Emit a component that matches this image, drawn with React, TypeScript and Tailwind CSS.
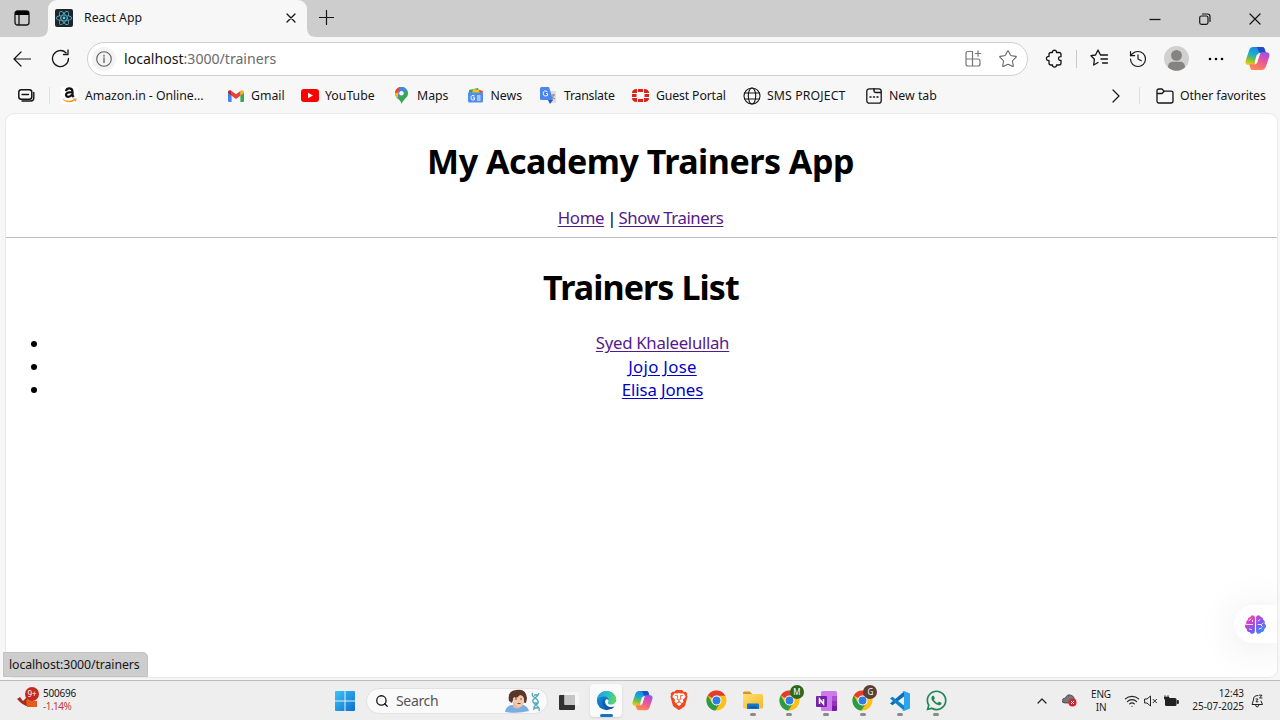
import React from "react";
import { FaBrain, FaReact, FaWhatsapp } from "react-icons/fa";
import { SiBrave } from "react-icons/si";
import { History, Star, Wifi, Search as SearchIcon } from "lucide-react";

const line = { fill: "none", stroke: "currentColor", strokeLinecap: "round" as const, strokeLinejoin: "round" as const };

function Gradients() {
  return (
    <svg className="absolute h-0 w-0" aria-hidden="true">
      <defs>
        <linearGradient id="brain" x1="0" y1="0" x2="1" y2="1">
          <stop offset="0" stopColor="#ff7a59" /><stop offset=".28" stopColor="#d63ecb" />
          <stop offset=".6" stopColor="#6f5cf5" /><stop offset="1" stopColor="#25a8ff" />
        </linearGradient>
        <linearGradient id="copA" x1=".6" y1="0" x2=".3" y2="1">
          <stop offset="0" stopColor="#1787e0" /><stop offset=".4" stopColor="#18a8d8" />
          <stop offset=".7" stopColor="#6cc04a" /><stop offset="1" stopColor="#f2c811" />
        </linearGradient>
        <linearGradient id="copB" x1=".7" y1="0" x2=".3" y2="1">
          <stop offset="0" stopColor="#a04ee8" /><stop offset=".45" stopColor="#e8559a" />
          <stop offset="1" stopColor="#ff8a4c" />
        </linearGradient>
        <linearGradient id="edgeA" x1="0" y1=".3" x2="1" y2=".5">
          <stop offset="0" stopColor="#1fa2e6" /><stop offset=".55" stopColor="#28c0c0" /><stop offset="1" stopColor="#62d957" />
        </linearGradient>
        <linearGradient id="edgeB" x1="0" y1="0" x2="1" y2="1">
          <stop offset="0" stopColor="#1795e0" /><stop offset="1" stopColor="#0b4da0" />
        </linearGradient>
        <linearGradient id="win" x1="0" y1="0" x2="1" y2="1">
          <stop offset="0" stopColor="#3cc4f5" /><stop offset="1" stopColor="#0a6fd0" />
        </linearGradient>
        <linearGradient id="folder" x1="0" y1="0" x2="1" y2="1">
          <stop offset="0" stopColor="#ffdf70" /><stop offset="1" stopColor="#f5b92b" />
        </linearGradient>
      </defs>
    </svg>
  );
}

function Copilot({ size }: { size: number }) {
  return (
    <svg width={size} height={size} viewBox="0 0 24 24">
      <path d="M8 1h8.5c1.3 0 2 .8 2.4 2L20 6.500h-5.200c-1.500 0-2.300.8-2.700 2.200L10 15.500c-.5 1.700-1.500 2.600-3.200 2.600H3.500C1 18.100 0 16.500.7 13.800L4 4C4.700 2 6 1 8 1z" fill="url(#copA)" />
      <path d="M12.500 1h4c1.300 0 2 .8 2.400 2L20 6.500h-4.500c-1.600 0-2.200-.7-2.600-2.300C12.400 2.500 12 1.500 10.500 1z" fill="#1b4fc0" />
      <path d="M16 23H7.500c-1.300 0-2-.8-2.400-2L4 17.500h5.200c1.500 0 2.300-.8 2.700-2.200L14 8.500c.5-1.700 1.500-2.600 3.200-2.600h3.300c2.500 0 3.500 1.600 2.800 4.300L20 20c-.7 2-2 3-4 3z" fill="url(#copB)" />
      <path d="M11.300 8.300h2.800l-2.600 7.400H9.200z" fill="#f7f7f7" />
    </svg>
  );
}

function Edge() {
  return (
    <svg width="21" height="21" viewBox="0 0 24 24">
      <circle cx="12" cy="12" r="11" fill="url(#edgeB)" />
      <path d="M1 12C1.500 5.500 6 1 12 1c6.500 0 11 4.700 11 9.800 0 3.500-2.500 5.700-5.700 5.700-2.500 0-4.300-1-3.500-2.300 1.800-3 .2-6.700-4.300-6.700C5 7.500 1.600 9.500 1 12z" fill="url(#edgeA)" />
      <path d="M9 12.500c0 4 3.500 7 7.500 7 2.200 0 4-.7 5-1.500-1 1.500-2.200 2.800-3.800 3.700C12 22.500 7.500 19 7.500 14.500c0-2.500 1.500-4.500 3.700-5C9.700 10.200 9 11.300 9 12.500z" fill="#0c59a4" />
      <path d="M13.800 14.200c-.8 1.300 1 2.300 3.500 2.300 2.200 0 4.200-1.100 5.100-3l.8 1.200c-.3 1.300-.8 2.500-1.500 3.500-1.400.9-3 1.300-4.700 1.300-4 0-6.500-3-6.500-6 0-1.300.5-2.200 1.300-2.900 2.300 0 3.600 1.400 2 3.600z" fill="#fafafa" />
    </svg>
  );
}

function Chrome() {
  return (
    <svg width="21" height="21" viewBox="0 0 24 24">
      <circle cx="12" cy="12" r="11.500" fill="#fbc116" />
      <path d="M12 12L2 6.300A11.500 11.500 0 0 1 22 6.500H12z" fill="#e33b2e" />
      <path d="M2 6.300l5.300 8.900L12 17.300 10.900 23.500A11.500 11.500 0 0 1 2 6.300z" fill="#2a9b47" />
      <path d="M12 17.500l3-1-4.100 7z" fill="#2a9b47" />
      <circle cx="12" cy="12" r="5.700" fill="#fff" /><circle cx="12" cy="12" r="4.500" fill="#2f7de1" />
    </svg>
  );
}

function BadgedChrome({ letter, color }: { letter: string; color: string }) {
  return (
    <span className="relative block">
      <Chrome />
      <span className={`absolute -top-[5px] left-[11px] flex size-[14px] items-center justify-center rounded-full text-[8px] text-white ${color}`}>{letter}</span>
    </span>
  );
}

function TabBar() {
  return (
    <header className="flex h-[37px] shrink-0 bg-[#cdcdcd]">
      <div className="flex w-[48px] items-center bg-[#cdcdcd] pb-[2px] pl-[14px]">
        <svg width="16" height="16" viewBox="0 0 16 16"><rect x="1" y="1" width="14" height="14" rx="2.500" {...line} strokeWidth="1.300" /><path d="M1 3.500Q1 1 3.500 1h9Q15 1 15 3.500V5H1z" /><path d="M5 5v10" stroke="currentColor" strokeWidth="1.300" /></svg>
      </div>
      <div className="-ml-[9px] flex h-[37px] items-end"><svg width="9" height="9"><path d="M9 0v9H0Q9 9 9 0" fill="#f7f7f7" /></svg></div>
      <div className="flex w-[259px] items-center rounded-t-[9px] bg-[#f7f7f7] pb-[2px] pl-[7px]">
        <span className="flex size-[18px] items-center justify-center rounded-[2px] bg-[#20242b] text-[#5cc5df]"><FaReact size={16} /></span>
        <span className="ml-[11px] w-[202px] pt-[1px] text-[12.300px]">React App</span>
        <svg width="10" height="10" viewBox="0 0 10 10"><path d="M1 1l8 8M9 1L1 9" {...line} strokeWidth="1.300" /></svg>
      </div>
      <div className="flex items-end"><svg width="9" height="9"><path d="M0 0v9h9Q0 9 0 0" fill="#f7f7f7" /></svg></div>
      <svg className="ml-[3px] mt-[10px]" width="15" height="15" viewBox="0 0 15 15"><path d="M7.500 .5v14M.5 7.500h14" {...line} strokeWidth="1.200" /></svg>
      <div className="ml-auto flex items-center pr-[19px]">
        <svg width="12" height="12" viewBox="0 0 12 12"><path d="M.5 6.500h11" stroke="currentColor" strokeWidth="1.300" /></svg>
        <svg className="ml-[38px]" width="12" height="12" viewBox="0 0 12 12"><rect x=".7" y="3" width="8.300" height="8.300" rx="1.800" {...line} strokeWidth="1.200" /><path d="M3.500 1h5Q11 1 11 3.500v5" {...line} strokeWidth="1.200" /></svg>
        <svg className="ml-[38px]" width="12" height="12" viewBox="0 0 12 12"><path d="M1 1l10 10M11 1L1 11" {...line} strokeWidth="1.200" /></svg>
      </div>
    </header>
  );
}

function Toolbar() {
  return (
    <div className="flex h-[43px] shrink-0 items-center pl-[13px]">
      <svg width="18" height="16" viewBox="0 0 18 16"><path d="M8 1L1 8l7 7M1 8h16.500" {...line} strokeWidth="1.200" /></svg>
      <svg className="ml-[20px]" width="19" height="19" viewBox="0 0 19 19"><path d="M17.500 9.500a8 8 0 1 1-2.500-5.800M17 1v4.500h-4.500" {...line} strokeWidth="1.300" /></svg>
      <div className="ml-[17px] flex h-[34px] w-[941px] items-center rounded-full border border-[#cfcfcf] bg-white pl-[4px]">
        <span className="flex size-[24px] items-center justify-center rounded-full bg-[#f3f3f3] text-[#606060]">
          <svg width="16" height="16" viewBox="0 0 16 16"><circle cx="8" cy="8" r="7.300" {...line} strokeWidth="1.100" /><path d="M8 7v4.500M8 4.200v1" {...line} strokeWidth="1.300" /></svg>
        </span>
        <span className="ml-[8px] w-[840.500px] text-[14.100px] text-[#6b6b6b]"><span className="text-[#151515]">localhost</span>:3000/trainers</span>
        <svg className="text-[#777]" width="17" height="17" viewBox="0 0 17 17"><path d="M7.500 1.500H3Q1 1.500 1 3.500v10.500q0 2 2 2h10q2 0 2-2v-3q0-2-2-2H1M7.500 1.500V16M13 .8v5.400M10.300 3.500h5.400" {...line} strokeWidth="1.200" /></svg>
        <Star className="ml-[16px] text-[#666]" size={20} strokeWidth={1.300} />
      </div>
      <svg className="ml-[17px]" width="19" height="19" viewBox="0 0 19 19"><path d="M4 5.500Q4 3.500 6 3.500h1.500C7 .5 12 .5 11.500 3.500H14q2 0 2 2v2.200c-3.300-.6-3.300 4.200 0 3.600V14q0 2-2 2h-2.500c.5 2.700-4.500 2.700-4 0H6q-2 0-2-2v-2.500c-3.500.5-3.500-4.500 0-4z" {...line} strokeWidth="1.300" /></svg>
      <span className="ml-[12px] h-[18px] w-px bg-[#c9c9c9]" />
      <svg className="ml-[13px]" width="19" height="19" viewBox="0 0 19 19"><path d="M10.500 6L8 1 5.500 6 1 6.700 4.400 10.200 3.700 16 8 13.500M10.500 6h7M11 10h6.500M12.500 14h5" {...line} strokeWidth="1.300" /></svg>
      <History className="ml-[19px]" size={20} strokeWidth={1.400} />
      <svg className="ml-[16px]" width="25" height="25" viewBox="0 0 24 24"><circle cx="12" cy="12" r="12" fill="#d2d0ce" /><circle cx="12" cy="9" r="5.200" fill="#858381" /><path d="M3.800 20.500C4 16.500 6 15 8.500 15h7c2.500 0 4.500 1.500 4.700 5.500a12 12 0 0 1-16.400 0z" fill="#858381" /></svg>
      <svg className="ml-[19px]" width="16" height="4" viewBox="0 0 16 4"><circle cx="2" cy="2" r="1.300" /><circle cx="8" cy="2" r="1.300" /><circle cx="14" cy="2" r="1.300" /></svg>
      <span className="ml-[20.500px]"><Copilot size={25} /></span>
    </div>
  );
}

function Bookmark({ icon, label, width, text }: { icon: React.ReactNode; label: string; width: string; text?: string }) {
  return (
    <a className={`flex shrink-0 items-center ${width}`}>
      <span className="flex w-[18px] shrink-0 justify-center">{icon}</span>
      <span className={`ml-[6.500px] mt-[1px] whitespace-nowrap ${text ?? ""}`}>{label}</span>
    </a>
  );
}

function Bookmarks() {
  return (
    <nav className="flex h-[33px] shrink-0 items-center pb-[2px] pl-[18px] text-[12.300px]">
      <svg width="17" height="13" viewBox="0 0 17 13"><rect x=".8" y=".8" width="13" height="9.500" rx="2.500" {...line} strokeWidth="1.500" /><path d="M4 5.500h6.500M15.800 3.500v5.300q0 3.200-3.200 3.200H4" {...line} strokeWidth="1.400" /></svg>
      <span className="ml-[14px] mr-[10.500px] h-[17px] w-px bg-[#e0e0e0]" />
      <Bookmark width="w-[166px]" label="Amazon.in - Online..." text="tracking-[-0.05px]" icon={
        <svg width="17" height="17" viewBox="0 0 17 17"><rect width="17" height="17" rx="2" fill="#fff" /><path d="M5 4.200Q5.300 1.400 8.300 1.400T11.500 4.300V8.500L12.600 10M11 5.200Q5 5 5 7.800 5 9.800 7.300 9.800 9.700 9.800 11 7.500" fill="none" stroke="#111" strokeWidth="2.200" /><path d="M.8 11.500q6.500 4 12.500.8l.4 1.400q-7.500 4-12.900-2.200zM12 11.500h3.500q.3 1.500-1 3.300z" fill="#f99a1c" /></svg>} />
      <Bookmark width="w-[74px]" label="Gmail" icon={
        <svg width="16" height="12" viewBox="0 0 16 12"><path d="M0 1.500L3.600 4v8H1.200Q0 12 0 10.800z" fill="#4285f4" /><path d="M16 1.500L12.400 4v8h2.400q1.200 0 1.200-1.200z" fill="#34a853" /><path d="M12.400 1l1.300-.8Q16 0 16 2v1l-3.600 2.700z" fill="#fbbc04" /><path d="M3.600 5.700V1L8 4.300 12.400 1v4.700L8 9z" fill="#ea4335" /><path d="M0 3V2Q0 0 2.300.2L3.600 1v4.700z" fill="#c5221f" /></svg>} />
      <Bookmark width="w-[92px]" label="YouTube" icon={
        <svg width="18" height="13" viewBox="0 0 18 13"><rect width="18" height="13" rx="3" fill="#f00" /><path d="M7 3.700v5.600l5-2.800z" fill="#fff" /></svg>} />
      <Bookmark width="w-[73.500px]" label="Maps" icon={
        <svg width="13" height="17" viewBox="0 0 13 17"><path d="M0 6.200A6.500 6.300 0 0 1 13 6.200C13 11 8 12 6.700 17 5.500 12 0 11 0 6.200z" fill="#34a853" /><path d="M0 6.200Q0 4 1.500 2.200L6.500 6.500 2 11.500Q0 9 0 6.200z" fill="#fbbc04" /><path d="M1.500 2.200Q3.500 0 6.500 0L3 5.500 0 6.200Q0 4 1.500 2.200z" fill="#ea4335" /><path d="M4.300.4Q9 -.9 11.700 3L2.500 12z" fill="#4285f4" /><circle cx="6.500" cy="6.200" r="2.200" fill="#fff" /></svg>} />
      <Bookmark width="w-[73.500px]" label="News" icon={
        <svg width="17" height="15" viewBox="0 0 17 15"><path d="M2 2l9-2 3 6H2z" fill="#34a853" /><path d="M6 1l8 1v4H5z" fill="#f6bd22" /><path d="M12 2l4 1-1 3h-2z" fill="#ea4335" /><path d="M1 4.500h15V13q0 1.500-1.500 1.500h-12Q1 14.500 1 13z" fill="#4f8df3" /><path d="M7.500 8Q4 6.500 4 9.800q0 3.200 3.500 1.800v-1.800H6M10 8h3.500M10 10h3.500M10 12h3.500" stroke="#fff" fill="none" /></svg>} />
      <Bookmark width="w-[92px]" label="Translate" text="tracking-[-0.25px]" icon={
        <svg width="17" height="17" viewBox="0 0 17 17"><path d="M6 4h8.500q1.500 0 1.500 1.500v9q0 1.500-1.500 1.500H9z" fill="#dcdcdc" /><path d="M1.500 0H9l4 13H1.500Q0 13 0 11.500v-10Q0 0 1.500 0z" fill="#4a86ee" /><path d="M8 13h5l-3 4z" fill="#2857b8" /><path d="M7.500 4.800Q3.300 2.500 3.300 6.300t4.200 2.200V6.500H6" stroke="#fff" fill="none" /><path d="M11.500 8H15M13.300 7v1q0 3-2 4M12 9.500q1 2 3 2.500" stroke="#888" fill="none" /></svg>} />
      <Bookmark width="w-[111px]" label="Guest Portal" text="tracking-[-0.15px]" icon={
        <svg width="17" height="13" viewBox="0 0 17 13"><g fill="#dd2018"><path d="M6 0h5v3H6zM6 10h5v3H6zM0 5h4.500v3H0zM12.500 5H17v3h-4.500zM0 4q0-4 5-4v4zM17 4q0-4-5-4v4zM0 9q0 4 5 4V9zM17 9q0 4-5 4V9z" /></g></svg>} />
      <Bookmark width="w-[122px]" label="SMS PROJECT" text="tracking-[0.1px]" icon={
        <svg width="18" height="18" viewBox="0 0 18 18"><g {...line} strokeWidth="1.100"><circle cx="9" cy="9" r="8" /><ellipse cx="9" cy="9" rx="3.700" ry="8" /><path d="M1.700 6h14.600M1.700 12h14.600" /></g></svg>} />
      <Bookmark width="w-[247px]" label="New tab" icon={
        <svg width="16" height="16" viewBox="0 0 16 16"><rect x=".8" y=".8" width="14.400" height="14.400" rx="2.500" {...line} strokeWidth="1.300" /><path d="M8 1v1.800Q8 4.500 9.700 4.500H15M4 9h1M7.500 9h1M11 9h1" {...line} strokeWidth="1.500" /></svg>} />
      <svg width="8" height="14" viewBox="0 0 8 14"><path d="M1 1l6 6-6 6" {...line} strokeWidth="1.200" /></svg>
      <span className="ml-[19px] mr-[16px] h-[17px] w-px bg-[#e0e0e0]" />
      <Bookmark width="w-[120px]" label="Other favorites" text="tracking-[-0.1px]" icon={
        <svg width="18" height="16" viewBox="0 0 18 16"><path d="M1 3Q1 1 3 1h3l2.200 2.200H15q2 0 2 2V13q0 2-2 2H3q-2 0-2-2zM1 5.500h5L8.200 3.200" {...line} strokeWidth="1.300" /></svg>} />
    </nav>
  );
}

const trainers = [
  { name: "Syed Khaleelullah", style: "text-[#551a8b] tracking-[-0.3px]" },
  { name: "Jojo Jose", style: "text-[#0000c8] tracking-[0.3px]" },
  { name: "Elisa Jones", style: "text-[#0000c8] tracking-[-0.1px]" },
];

function Page() {
  return (
    <main className="relative ml-[5px] mr-[2px] h-[565px] shrink-0 overflow-hidden rounded-[9px] border border-[#e9e9e9] bg-white text-center text-black">
      <h1 className="mt-[22px] h-[50px] pr-[2px] text-[34px] leading-[50px] font-bold tracking-[-0.48px]">My Academy Trainers App</h1>
      <div className="mt-[20px] h-[24px] pr-[2px] text-[16.800px] leading-[24px] tracking-[-0.45px]">
        <a className="tracking-[-0.3px] text-[#551a8b] underline underline-offset-2">Home</a><span className="tracking-[-1.200px]"> | </span><a className="text-[#551a8b] underline underline-offset-2">Show Trainers</a>
      </div>
      <hr className="mt-[7px] border-[#bdbdbd]" />
      <h1 className="mt-[24px] h-[50px] pr-[1px] text-[34px] leading-[50px] font-bold tracking-[-0.9px]">Trainers List</h1>
      <ul className="mt-[20px] text-[16.800px]">
        {trainers.map((t) => (
          <li key={t.name} className="flex h-[23.400px] items-center">
            <span className="ml-[25px] size-[6px] rounded-full bg-black" />
            <span className="flex-1 pb-[1.500px] pl-[11px] leading-[23px]"><a className={`underline underline-offset-2 ${t.style}`}>{t.name}</a></span>
          </li>
        ))}
      </ul>
      <div className="absolute -right-px top-[491px] flex h-[38px] w-[44px] items-center rounded-l-full bg-white pl-[11px] shadow-[0_4px_40px_rgba(0,0,0,0.1)]">
        <span className="relative">
          <FaBrain size={21} fill="url(#brain)" />
          <svg className="absolute inset-0" width="21" height="21" viewBox="0 0 21 21"><path d="M1.500 10.500h6M4 6.500l2-1.500M4.500 15l2 .5M7.500 7.500v-1M13 7l2-1.500M13 10.500h3.500l1.500-1.500M14 15l2.500-1M16 11l1.500 1.500" fill="none" stroke="#fff" strokeOpacity=".85" strokeLinecap="round" /></svg>
        </span>
      </div>
    </main>
  );
}

function TaskIcon({ children, running }: { children: React.ReactNode; running?: "idle" | "active" }) {
  return (
    <div className="relative flex h-[34px] w-[36.700px] items-center justify-center">
      {running === "active" && <span className="absolute inset-x-[2px] bottom-[1px] top-0 rounded-[4px] bg-[#fafafa] shadow-sm" />}
      <span className="relative">{children}</span>
      {running === "idle" && <span className="absolute bottom-[2px] h-[3px] w-[6px] rounded-full bg-[#8a8a8a]" />}
      {running === "active" && <span className="absolute bottom-[1px] h-[3px] w-[13px] rounded-full bg-[#1672c4]" />}
    </div>
  );
}

function Taskbar() {
  return (
    <footer className="flex h-[40px] shrink-0 items-center border-t border-[#bcbcbc] bg-[#eeeeee]">
      <div className="flex w-[335px] items-center pb-[2px] pl-[17px] text-[10px]">
        <span className="relative mb-[3px] flex h-[22px] w-[22px]">
          <svg width="22" height="22" viewBox="0 0 22 22"><path d="M0 12l3-2 3 4 4-4 2 8-3 1-5-3z" fill="#a3301c" /><path d="M9 13l11 1v6H10z" fill="#e75b19" /></svg>
          <span className="absolute right-0 top-0 flex size-[14px] items-center justify-center rounded-full bg-[#c5281f] text-[8px] text-white">9+</span>
        </span>
        <div className="ml-[4px] leading-[13px]"><div className="tracking-[-0.2px]">500696</div><div className="tracking-[-0.05em] text-[#c63c34]">-1.14%</div></div>
      </div>
      <svg width="20" height="20" viewBox="0 0 20 20"><path d="M0 1Q0 0 1 0h8.500v9.500H0zM10.500 0H19q1 0 1 1v8.500h-9.500zM0 10.500h9.500V20H1q-1 0-1-1zM10.500 10.500H20V19q0 1-1 1h-8.500z" fill="url(#win)" /></svg>
      <div className="ml-[11px] mr-[3px] flex h-[26px] w-[182px] items-center rounded-full border border-[#e2e2e2] bg-[#fafafa] pl-[8px]">
        <SearchIcon size={14} strokeWidth={2.200} />
        <span className="ml-[7px] w-[109px] text-[14px] tracking-[-0.35px] text-[#555]">Search</span>
        <svg width="37" height="24" viewBox="0 0 37 24"><path d="M0 23Q1 16 8 16l8-1q7 2 8 7-11 3-24 1z" fill="#79aee2" /><path d="M8 13h8v5q-4 3-8 0z" fill="#e8b79c" /><path d="M4 12Q2 2 11 1q10-2 11 8l-1 5-4-1-8-5-2 6z" fill="#5b3528" /><path d="M8 9q4 1 7-3 5 1 4 7-1 6-6 5-5-2-5-9z" fill="#f2c9ae" /><path d="M10 10h2M15 10h2M12.500 14.500h3" stroke="#8a4234" /><path d="M28 4q-2 2 1 4t4 4-2 4-2 5M34 4q-1 3-4 5t-2 4 4 4 2 5M29 6h4M29 14h4M29 19h4" fill="none" stroke="#4fa9bd" strokeWidth="1.300" /></svg>
      </div>
      <TaskIcon><svg width="20" height="20" viewBox="0 0 20 20"><rect x="0" y="4" width="16" height="15" rx="1" fill="#303030" /><rect x="5.500" y="1" width="14.500" height="13" rx="1" fill="#f6f6f6" /><rect x="5.500" y="4" width="10.500" height="10" fill="#c6c6c6" /></svg></TaskIcon>
      <TaskIcon running="active"><Edge /></TaskIcon>
      <TaskIcon><Copilot size={21} /></TaskIcon>
      <TaskIcon><svg width="20" height="21" viewBox="0 0 20 21"><path d="M4 3h12v11l-6 4-6-4z" fill="#fff" /><SiBrave size={20} color="#f0481f" /></svg></TaskIcon>
      <TaskIcon><Chrome /></TaskIcon>
      <TaskIcon running="idle"><svg width="20" height="19" viewBox="0 0 20 19"><path d="M0 2Q0 .5 1.500.5H7L9 3H0z" fill="#d9941a" /><path d="M0 3h18.500Q20 3 20 4.500V16q0 1.500-1.500 1.500h-17Q0 17.500 0 16z" fill="url(#folder)" /><path d="M4 13.500q0-1 1-1h10q1 0 1 1v4.500H4z" fill="#1575c8" /><path d="M6 15.500h8V17H6z" fill="#0a559f" /></svg></TaskIcon>
      <TaskIcon running="idle"><BadgedChrome letter="M" color="bg-[#2c671d]" /></TaskIcon>
      <TaskIcon running="idle"><svg width="21" height="20" viewBox="0 0 21 20"><rect x="5" y="0" width="16" height="20" rx="1.500" fill="#cc79ea" /><path d="M16 5h5v5h-5z" fill="#ae4bd5" /><path d="M16 10h5v5h-5z" fill="#9332bf" /><path d="M16 15h5v3.500q0 1.500-1.500 1.500H16z" fill="#7719aa" /><rect y="5" width="11" height="11" rx="1" fill="#7620a7" /><path d="M3.500 13V8l4 5V8" stroke="#fff" strokeWidth="1.500" fill="none" /></svg></TaskIcon>
      <TaskIcon running="idle"><BadgedChrome letter="G" color="bg-[#5b4038]" /></TaskIcon>
      <TaskIcon running="idle"><svg width="20" height="20" viewBox="0 0 20 20"><path d="M14 .5L0 12.500l2.500 1.800L14 5.500z" fill="#0b6cb5" /><path d="M0 7.500L2.500 5.700 14 14.500v5z" fill="#1180ca" /><path d="M14 0l6 2.500v15L14 20q-1 0-1.500-1l1.500-1V2L12.500 1Q13 0 14 0z" fill="#2aa5ee" /></svg></TaskIcon>
      <TaskIcon running="idle"><FaWhatsapp size={23} color="#218653" /></TaskIcon>
      <div className="ml-auto flex items-center pr-[16px] text-[#222]">
        <svg width="10" height="6" viewBox="0 0 10 6"><path d="M1 5l4-4 4 4" {...line} strokeWidth="1.200" /></svg>
        <svg className="ml-[14.500px]" width="15" height="13" viewBox="0 0 15 13"><path d="M3 9Q0 9 .3 6.500T3.500 4Q5-.2 9 1.200q3 1 3 3 1.500 1 1 4.800z" fill="#777" stroke="#333" strokeWidth=".7" /><circle cx="10.500" cy="8.500" r="4" fill="#d22630" /><path d="M9 7l3 3M12 7l-3 3" stroke="#fff" /></svg>
        <span className="ml-[13.500px] w-[22px] text-center text-[10px] leading-[13px] tracking-[-0.2px]">ENG<br />IN</span>
        <Wifi className="ml-[12px]" size={16} strokeWidth={1.700} />
        <svg className="ml-[4px]" width="14" height="12" viewBox="0 0 14 12"><path d="M1 4h2l3.500-3v10L3 8H1zM9 4.300l3.500 3.500M12.500 4.300L9 7.800" {...line} strokeWidth="1" /></svg>
        <svg className="ml-[6px]" width="15" height="12" viewBox="0 0 15 12"><rect x="1" y="3" width="11.500" height="8" rx="1.500" fill="#222" /><path d="M13 5.500h1.500v3H13zM1 0v2M4 0v2M0 2h5v1.500Q4 5 2.500 5T0 3.500z" fill="#222" stroke="#222" strokeWidth=".7" /></svg>
        <span className="ml-[4px] w-[61px] whitespace-nowrap pb-[2px] text-right text-[10px] leading-[13px] tracking-[-0.05px]">12:43<br />25-07-2025</span>
        <svg className="ml-[7px]" width="13" height="14" viewBox="0 0 13 14"><path d="M7 1.500Q2 1.500 2.500 6L1 10.500h10.500L10 7M4.500 10.500Q4.700 13 6.200 13T8 10.500M5 5h2L5 7.800h2M8.500 1.200H11L8.500 4H11" {...line} strokeWidth="1" /></svg>
      </div>
    </footer>
  );
}

export default function App() {
  return (
    <div className="relative flex h-[720px] w-[1280px] flex-col overflow-hidden bg-[#f7f7f7] text-[#151515] [font-family:'Noto_Sans','Open_Sans',sans-serif]">
      <Gradients />
      <TabBar />
      <Toolbar />
      <Bookmarks />
      <Page />
      <div className="h-[2px] shrink-0" />
      <Taskbar />
      <div className="absolute left-[3px] top-[652px] flex h-[25px] w-[145px] items-center whitespace-nowrap rounded-tr-[5px] border border-[#c2c2c2] bg-[#cdcdcd] pl-[5px] pt-[2px] text-[12.300px] tracking-[-0.1px]">localhost:3000/trainers</div>
    </div>
  );
}
